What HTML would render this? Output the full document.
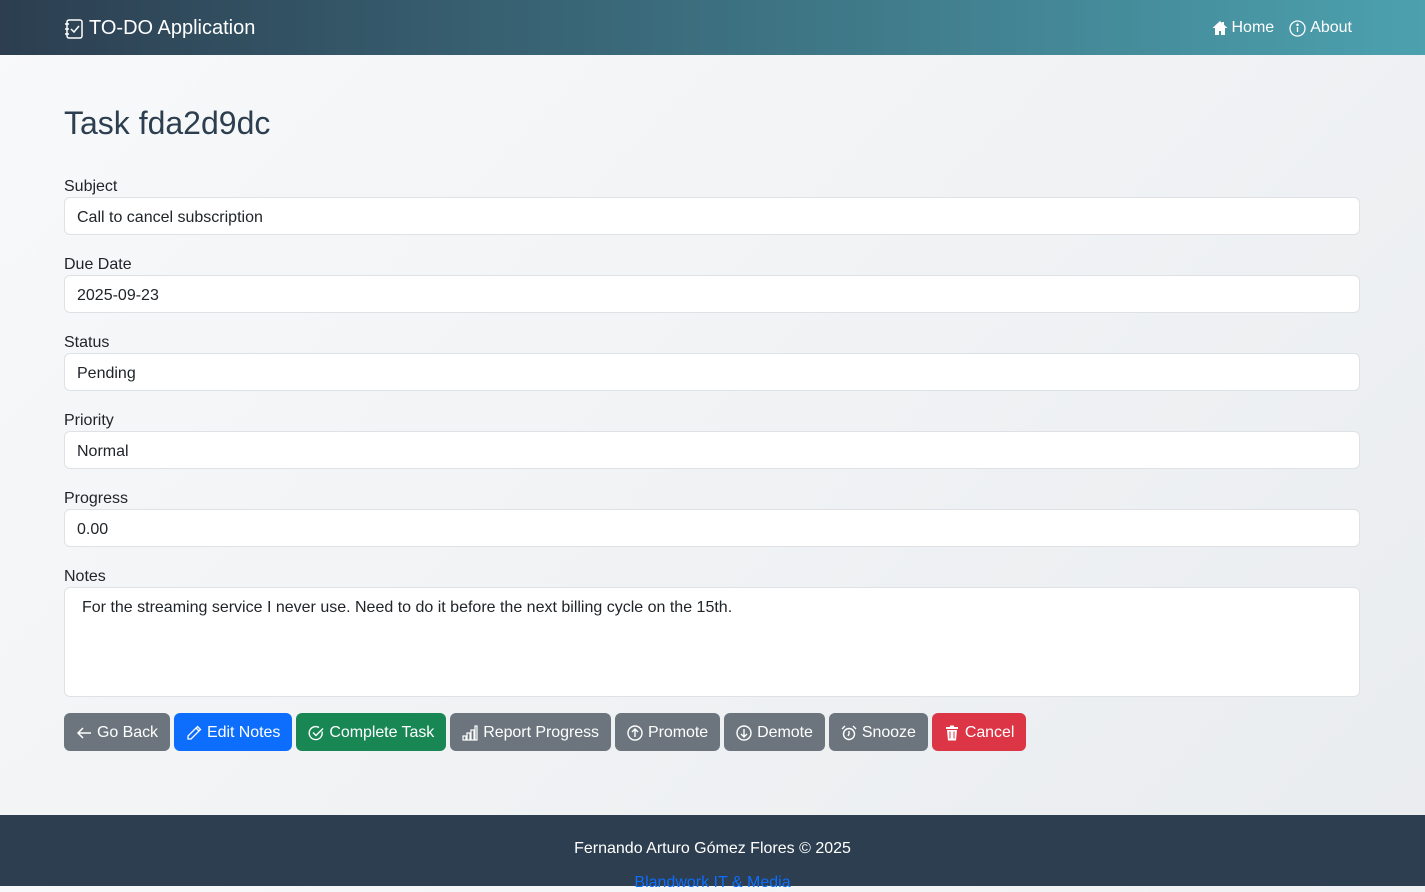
<!DOCTYPE html>
<html><head><meta charset="utf-8"><style>
*{box-sizing:border-box;margin:0;padding:0}
body{width:1425px;height:886px;overflow:hidden;font-family:"Segoe UI","Liberation Sans",sans-serif;font-size:16px;color:#212529;background:linear-gradient(135deg,#f8f9fa,#e9ecef);position:relative}
.nav{height:55px;background:linear-gradient(90deg,#2c3e50,#4ca1af);color:#fff;position:relative}
.brand{position:absolute;left:64px;top:17px;font-size:20px;display:flex;align-items:center;gap:5px}
.links{position:absolute;right:73px;top:19px;display:flex;gap:15px;font-size:16px}
.links span{display:flex;align-items:center;gap:4px}
h1{position:absolute;left:64px;top:105px;font-size:32px;font-weight:500;color:#2c3e50}
.f{position:absolute;left:64px;width:1296px}
.f label{display:block;height:24px;line-height:28px;font-size:16px}
.f .in{height:38px;border:1px solid #dee2e6;border-radius:6px;background:#fff;padding:0 12px;line-height:39px}
.f .ta{height:110px;line-height:24px;padding:8px 17px}
.btns{position:absolute;left:64px;top:713px;display:flex;gap:4px}
.b{height:38px;border-radius:6px;color:#fff;padding:2px 12px 0;display:flex;align-items:center;gap:5px;font-size:16px;letter-spacing:-0.05px}
.g{background:#6c757d}.p{background:#0d6efd}.s{background:#198754}.d{background:#dc3545}
.foot{position:absolute;left:0;top:815px;width:1425px;height:71px;background:#2d3e50;color:#fff;text-align:center}
.foot div{padding-top:25px}
.foot a{display:block;color:#0d6efd;margin-top:16px;text-decoration:none}
svg{display:block}
</style></head><body>
<div class="nav">
<div class="brand"><svg width="20" height="22" viewBox="0 0 20 22" fill="none" stroke="#fff" stroke-width="1.5"><rect x="3" y="2" width="15" height="18" rx="2"/><path d="M1 6h4M1 11h4M1 16h4M7 11l3 3 5-6"/></svg>TO-DO Application</div>
<div class="links"><span><svg width="16" height="16" viewBox="0 0 16 16" fill="#fff"><path d="M8 1 0.5 8H3v7h4v-4h2v4h4V8h2.5L12 4.7V2h-2v1z"/></svg>Home</span><span><svg width="17" height="17" viewBox="0 0 17 17" fill="none" stroke="#fff" stroke-width="1.3"><circle cx="8.5" cy="8.5" r="7.5"/><path d="M8.5 7v5"/><circle cx="8.5" cy="4.8" r=".6" fill="#fff"/></svg>About</span></div>
</div>
<h1>Task fda2d9dc</h1>
<div class="f" style="top:173px"><label>Subject</label><div class="in">Call to cancel subscription</div></div>
<div class="f" style="top:251px"><label>Due Date</label><div class="in">2025-09-23</div></div>
<div class="f" style="top:329px"><label>Status</label><div class="in">Pending</div></div>
<div class="f" style="top:407px"><label>Priority</label><div class="in">Normal</div></div>
<div class="f" style="top:485px"><label>Progress</label><div class="in">0.00</div></div>
<div class="f" style="top:563px"><label>Notes</label><div class="in ta">For the streaming service I never use. Need to do it before the next billing cycle on the 15th.</div></div>
<div class="btns">
<div class="b g"><svg width="16" height="16" viewBox="0 0 16 16" fill="none" stroke="#fff" stroke-width="1.5"><path d="M15 8H2M7 3 2 8l5 5"/></svg>Go Back</div>
<div class="b p"><svg width="16" height="16" viewBox="0 0 16 16" fill="none" stroke="#fff" stroke-width="1.3"><path d="M11.5 1.5l3 3L5 14H2v-3zM10 3l3 3"/></svg>Edit Notes</div>
<div class="b s"><svg width="16" height="16" viewBox="0 0 16 16" fill="none" stroke="#fff" stroke-width="1.4"><path d="M14 6.5A6.5 6.5 0 1 1 11 2.5"/><path d="M5 7.5l3 3 7-7"/></svg>Complete Task</div>
<div class="b g"><svg width="16" height="16" viewBox="0 0 16 16" fill="none" stroke="#fff" stroke-width="1.2"><rect x="1" y="11" width="3" height="4"/><rect x="5" y="8" width="3" height="7"/><rect x="9" y="5" width="3" height="10"/><rect x="13" y="1" width="2" height="14"/></svg>Report Progress</div>
<div class="b g"><svg width="16" height="16" viewBox="0 0 16 16" fill="none" stroke="#fff" stroke-width="1.4"><circle cx="8" cy="8" r="7"/><path d="M8 12V4M5 7l3-3 3 3"/></svg>Promote</div>
<div class="b g"><svg width="16" height="16" viewBox="0 0 16 16" fill="none" stroke="#fff" stroke-width="1.4"><circle cx="8" cy="8" r="7"/><path d="M8 4v8M5 9l3 3 3-3"/></svg>Demote</div>
<div class="b g"><svg width="16" height="16" viewBox="0 0 16 16" fill="none" stroke="#fff" stroke-width="1.4"><circle cx="8" cy="9" r="5.5"/><path d="M8 6v3l-1 2M1 4l3-3M15 4l-3-3"/></svg>Snooze</div>
<div class="b d"><svg width="16" height="16" viewBox="0 0 16 16" fill="#fff"><path d="M2 2h12v2H2zM6 0.5h4V2H6zM3 5h10l-1 10.5H4zM5.5 6.5v7h1v-7zM9.5 6.5v7h1v-7z"/></svg>Cancel</div>
</div>
<div class="foot"><div>Fernando Arturo Gómez Flores © 2025</div><a>Blandwork IT &amp; Media</a></div>
</body></html>
